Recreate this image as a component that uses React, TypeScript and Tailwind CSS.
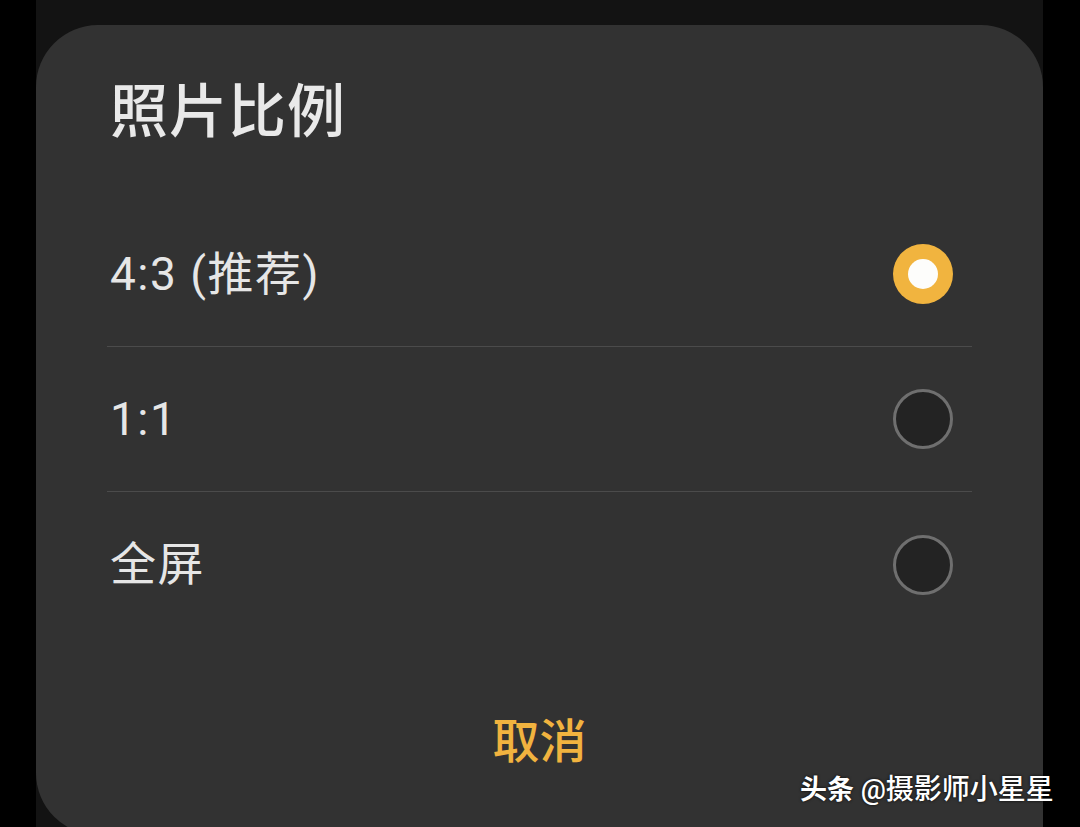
import React, { useState } from 'react';

const OPTIONS = ['4:3 (推荐)', '1:1', '全屏'];

const Radio = ({ on }: { on: boolean }) =>
  on ? (
    <div className="w-[60px] h-[60px] rounded-full bg-[#f1b43f] flex items-center justify-center">
      <div className="w-[30px] h-[30px] rounded-full bg-[#fdfdfb]" />
    </div>
  ) : (
    <div className="w-[60px] h-[60px] rounded-full bg-[#232323] border-[3px] border-[#6f6f6f]" />
  );

export default function App() {
  const [selected, setSelected] = useState(0);

  return (
    <div
      className="w-[1080px] h-[827px] bg-black flex overflow-hidden"
      style={{ fontFamily: 'Roboto, "Noto Sans CJK SC", sans-serif' }}
    >
      <div className="ml-[36px] w-[1007px] h-full bg-[#131313] pt-[25px] relative">
        <div className="h-[810px] bg-[#323232] rounded-t-[62px] rounded-bl-[62px] px-[71px] flex flex-col">
          <h1 className="mt-[57px] pl-[3px] text-[58px] leading-[60px] font-medium text-[#e9e9e9] tracking-[1px]">
            照片比例
          </h1>

          <div className="mt-[60px] flex flex-col">
            {OPTIONS.map((label, idx) => (
              <div
                key={idx}
                onClick={() => setSelected(idx)}
                className={`h-[145px] flex items-center justify-between pl-[3px] pr-[19px] cursor-pointer ${
                  idx < OPTIONS.length - 1 ? 'border-b border-[#4b4b4b]' : ''
                }`}
              >
                <span className="text-[46px] text-[#e6e6e6] tracking-[1.5px]">{label}</span>
                <Radio on={selected === idx} />
              </div>
            ))}
          </div>

          <button className="mt-[81px] self-center text-[47px] font-medium text-[#f1b33f] leading-none">
            取消
          </button>
        </div>

        <div className="absolute left-[764px] top-[769px] whitespace-nowrap text-[27px] font-medium text-white [text-shadow:0_0_3px_rgba(0,0,0,0.9)]">
          <span className="font-bold">头条</span> <span className="text-[28px]">@摄影师小星星</span>
        </div>
      </div>
    </div>
  );
}
